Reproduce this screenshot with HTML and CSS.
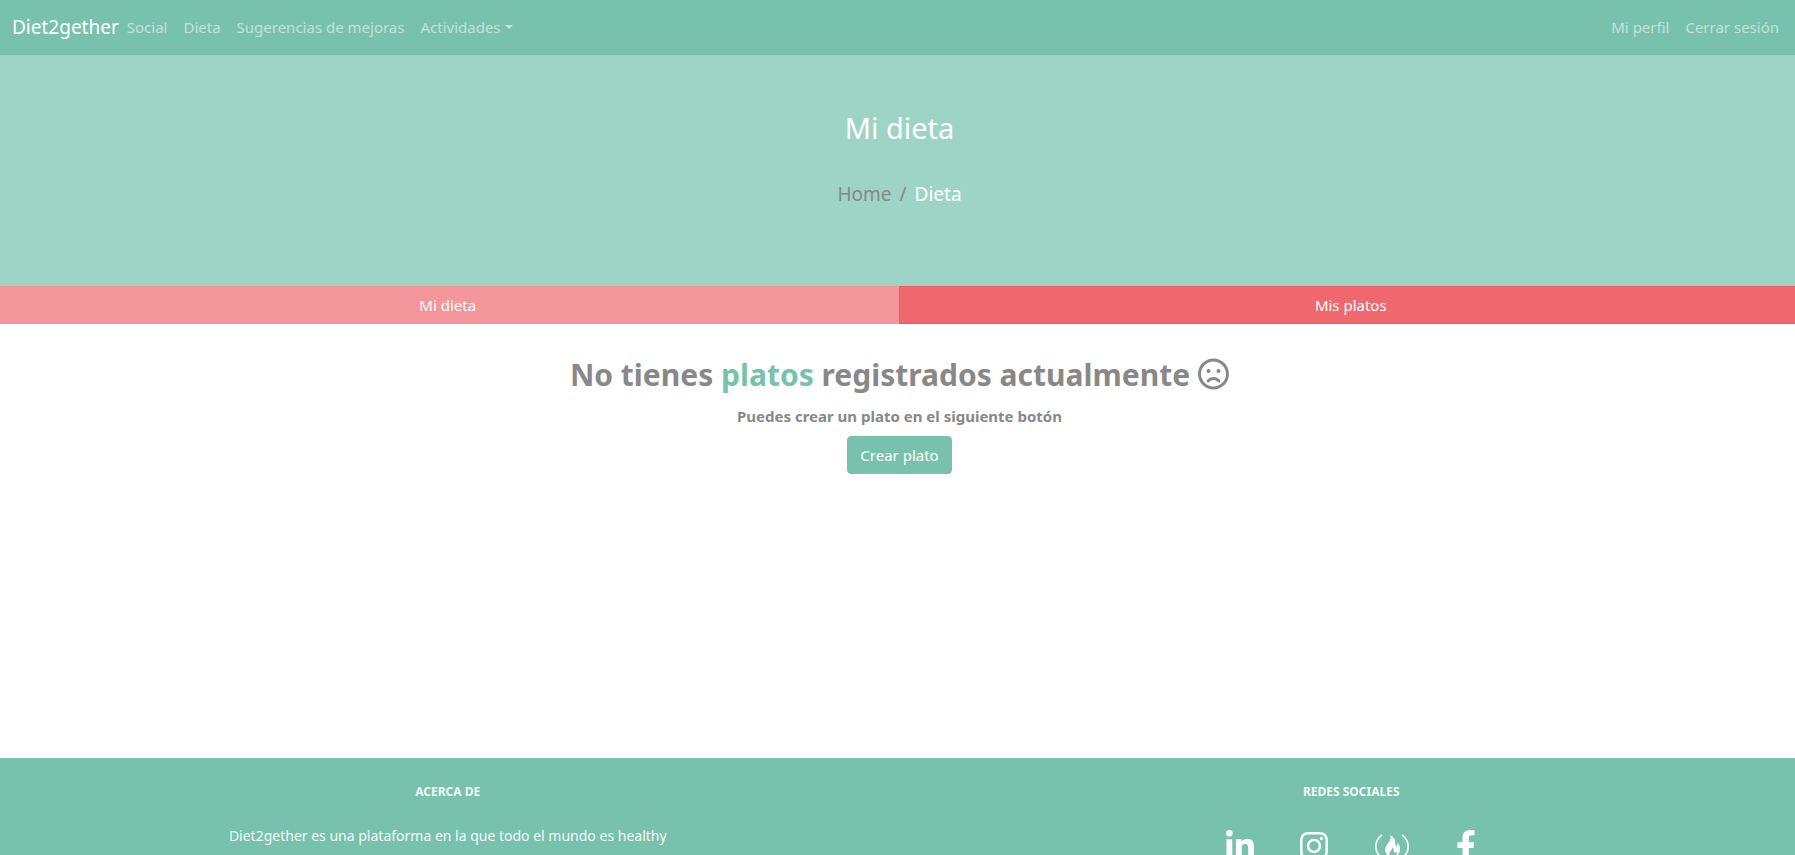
FILE: index.html
```html
<!DOCTYPE html>
<html lang="es">
<head>
<meta charset="utf-8">
<meta name="viewport" content="width=device-width, initial-scale=1">
<title>Diet2gether - Mi dieta</title>
<link rel="stylesheet" href="styles.css">
</head>
<body>
<div class="page">
  <nav class="navbar" aria-label="Principal">
    <a class="brand" href="#">Diet2gether</a>
    <ul class="nav-list">
      <li><a class="nav-link" href="#">Social</a></li>
      <li><a class="nav-link" href="#">Dieta</a></li>
      <li><a class="nav-link" href="#">Sugerencias de mejoras</a></li>
      <li><a class="nav-link dropdown" href="#" aria-haspopup="true">Actividades</a></li>
    </ul>
    <ul class="nav-list nav-end">
      <li><a class="nav-link" href="#">Mi perfil</a></li>
      <li><a class="nav-link" href="#">Cerrar sesión</a></li>
    </ul>
  </nav>

  <header class="hero">
    <h1 class="hero-title">Mi dieta</h1>
    <nav aria-label="Ruta">
      <ol class="breadcrumb">
        <li><a href="#">Home</a></li>
        <li class="current" aria-current="page">Dieta</li>
      </ol>
    </nav>
  </header>

  <div class="row tabs">
    <button class="tab" type="button">Mi dieta</button>
    <button class="tab active" type="button">Mis platos</button>
  </div>

  <main class="content">
    <h2 class="empty-title">
      <span>No tienes <span class="accent">platos</span> registrados actualmente</span>
      <svg class="frown" viewBox="0 0 496 512" aria-hidden="true"><path d="M248 8C111 8 0 119 0 256s111 248 248 248 248-111 248-248S385 8 248 8zm0 448c-110.3 0-200-89.7-200-200S137.7 56 248 56s200 89.7 200 200-89.7 200-200 200zm-80-216c17.7 0 32-14.3 32-32s-14.3-32-32-32-32 14.3-32 32 14.3 32 32 32zm160-64c-17.7 0-32 14.3-32 32s14.3 32 32 32 32-14.3 32-32-14.3-32-32-32zm-80 128c-40.2 0-78 17.7-103.8 48.6-8.5 10.2-7.1 25.3 3.1 33.8 10.2 8.4 25.3 7.1 33.8-3.1 16.6-19.9 41-31.4 66.9-31.4s50.3 11.4 66.9 31.4c8.1 9.7 23.1 11.9 33.8 3.1 10.2-8.5 11.5-23.6 3.1-33.8C326 321.7 288.2 304 248 304z"/></svg>
    </h2>
    <p class="empty-text">Puedes crear un plato en el siguiente botón</p>
    <button class="btn" type="button">Crear plato</button>
  </main>

  <footer class="footer">
    <div class="row">
      <section class="footer-col">
        <h3 class="footer-title">ACERCA DE</h3>
        <p class="footer-text">Diet2gether es una plataforma en la que todo el mundo es healthy</p>
      </section>
      <section class="footer-col">
        <h3 class="footer-title">REDES SOCIALES</h3>
        <div class="social">
          <a href="#" aria-label="LinkedIn"><svg viewBox="0 0 448 512"><path d="M100.28 448H7.4V148.9h92.88zM53.79 108.1C24.09 108.1 0 83.5 0 53.8a53.79 53.79 0 0 1 107.58 0c0 29.7-24.1 54.3-53.79 54.3zM447.9 448h-92.68V302.4c0-34.7-.7-79.2-48.29-79.2-48.29 0-55.69 37.7-55.69 76.7V448h-92.78V148.9h89.08v40.8h1.3c12.4-23.5 42.69-48.3 87.88-48.3 94 0 111.28 61.9 111.28 142.3V448z"/></svg></a>
          <a href="#" aria-label="Instagram"><svg viewBox="0 0 448 512"><path d="M224.1 141c-63.6 0-114.9 51.3-114.9 114.9s51.3 114.9 114.9 114.9S339 319.5 339 255.9 287.7 141 224.1 141zm0 189.6c-41.1 0-74.7-33.5-74.7-74.7s33.5-74.7 74.7-74.7 74.7 33.5 74.7 74.7-33.6 74.7-74.7 74.7zm146.4-194.3c0 14.9-12 26.8-26.8 26.8-14.9 0-26.8-12-26.8-26.8s12-26.8 26.8-26.8 26.8 12 26.8 26.8zm76.1 27.2c-1.7-35.9-9.9-67.7-36.2-93.9-26.2-26.2-58-34.4-93.9-36.2-37-2.1-147.9-2.1-184.9 0-35.8 1.7-67.6 9.9-93.9 36.1s-34.4 58-36.2 93.9c-2.1 37-2.1 147.9 0 184.9 1.7 35.9 9.9 67.7 36.2 93.9s58 34.4 93.9 36.2c37 2.1 147.9 2.1 184.9 0 35.9-1.7 67.7-9.9 93.9-36.2 26.2-26.2 34.4-58 36.2-93.9 2.1-37 2.1-147.8 0-184.8zM398.8 388c-7.8 19.6-22.9 34.7-42.6 42.6-29.5 11.7-99.5 9-132.1 9s-102.7 2.6-132.1-9c-19.6-7.8-34.7-22.9-42.6-42.6-11.7-29.5-9-99.5-9-132.1s-2.6-102.7 9-132.1c7.8-19.6 22.9-34.7 42.6-42.6 29.5-11.7 99.5-9 132.1-9s102.7-2.6 132.1 9c19.6 7.8 34.7 22.9 42.6 42.6 11.7 29.5 9 99.5 9 132.1s2.7 102.7-9 132.1z"/></svg></a>
          <a href="#" aria-label="freeCodeCamp"><svg viewBox="0 0 36 32"><path d="M7.400 5.400C-.1 11.600-.1 21.400 7.400 27.600M28.600 5.400c7.500 6.200 7.500 16 0 22.200" fill="none" stroke="#fff" stroke-width="1.600" stroke-linecap="round"/><path d="M16.200 5.600c5.400 2 5 6.200 5.200 9.200.1 1.900 2.300 1.600 2.200-1-.1-.8-.3-1.200-.3-1.300 2 1.900 3 4.500 2.700 7.300-.3 3.300-2.200 5.500-4.400 6.400 1.500-1.600 1.800-3.300.8-4.800-.6 1-1.200 1.300-1.900 1.200-1.500-.5.400-3.400-2.100-5.400.2 2.900-4 4.800-2.900 7.600.2.700.6 1.200 1 1.500-3.600-1.200-5.700-4-5.300-7.400.5-5 7-7.500 5-13.300z"/></svg></a>
          <a href="#" aria-label="Facebook"><svg viewBox="0 0 320 512"><path d="M279.14 288l14.22-92.66h-88.91v-60.13c0-25.35 12.42-50.06 52.24-50.06h40.42V6.260S260.430 0 225.360 0c-73.220 0-121.080 44.380-121.080 124.720v70.620H22.890V288h81.390v224h100.170V288z"/></svg></a>
        </div>
      </section>
    </div>
  </footer>
</div>
</body>
</html>
```
FILE: styles.css
```css
* { box-sizing: border-box; }

body {
  margin: 0;
  overflow-x: hidden;
  background: #fff;
  color: #888;
  font-family: "Segoe UI", "Noto Sans", "Open Sans", sans-serif;
  font-size: 15px;
  line-height: 24px;
}

a { color: inherit; text-decoration: none; }
h1, h2, h3, p, ul, ol { margin: 0; padding: 0; }
ul, ol { list-style: none; }
button { font: inherit; cursor: pointer; }
svg { display: block; height: 32px; fill: currentColor; }

.page {
  display: flex;
  flex-direction: column;
  min-height: 100vh;
  margin-right: -4px;
  overflow: hidden;
}

.row {
  display: grid;
  grid-template-columns: 1fr 1fr;
  margin: 0 -4px;
}

.navbar {
  display: flex;
  align-items: center;
  min-height: 55px;
  padding: 0 12px 2px;
  background: #78c2ad;
}
.brand { color: #fff; font-size: 19px; }
.nav-list { display: flex; }
.nav-end { margin-left: auto; }
.nav-link {
  display: block;
  padding: 8px;
  color: rgba(255, 255, 255, .55);
}
.dropdown::after {
  content: "";
  display: inline-block;
  margin-left: 4px;
  vertical-align: 4px;
  border: 4px solid transparent;
  border-top-color: currentColor;
  border-bottom: 0;
}

.hero {
  display: flex;
  flex-direction: column;
  align-items: center;
  gap: 32px;
  padding: 53px 16px 77px;
  background: #9dd4c5;
  color: #fff;
}
.hero-title { font-size: 29px; font-weight: 400; line-height: 39px; }
.breadcrumb { display: flex; font-size: 19px; line-height: 30px; color: #888; }
.breadcrumb .current { color: #fff; }
.breadcrumb .current::before { content: "/"; padding: 0 8px; color: #888; }

.tab {
  padding: 6px 12px;
  border: 1px solid #f3969a;
  background: #f3969a;
  color: #fff;
}
.tab.active { margin-left: -1px; background: #f0686e; border-color: #ee5c63; }

.content {
  display: flex;
  flex-direction: column;
  align-items: center;
  gap: 8px;
  min-height: 434px;
  padding: 29px 16px;
  font-weight: 700;
}
.empty-title {
  display: flex;
  align-items: center;
  gap: 8px;
  font-size: 30px;
  line-height: 43px;
}
.frown { margin-bottom: 2px; }
.accent { color: #78c2ad; }
.empty-text { line-height: 24px; }
.btn {
  padding: 6px 12px;
  border: 1px solid #78c2ad;
  border-radius: 4px;
  background: #78c2ad;
  color: #fff;
  font-weight: 400;
}

.footer {
  flex: 1;
  padding: 24px 0;
  background: #78c2ad;
  color: #fff;
  text-align: center;
}
.footer-title { margin-bottom: 22px; font-size: 12px; line-height: 20px; opacity: .9; }
.footer-text { font-size: 14px; opacity: .9; }
.social { display: flex; justify-content: center; gap: 46px; padding-top: 6px; }
```
